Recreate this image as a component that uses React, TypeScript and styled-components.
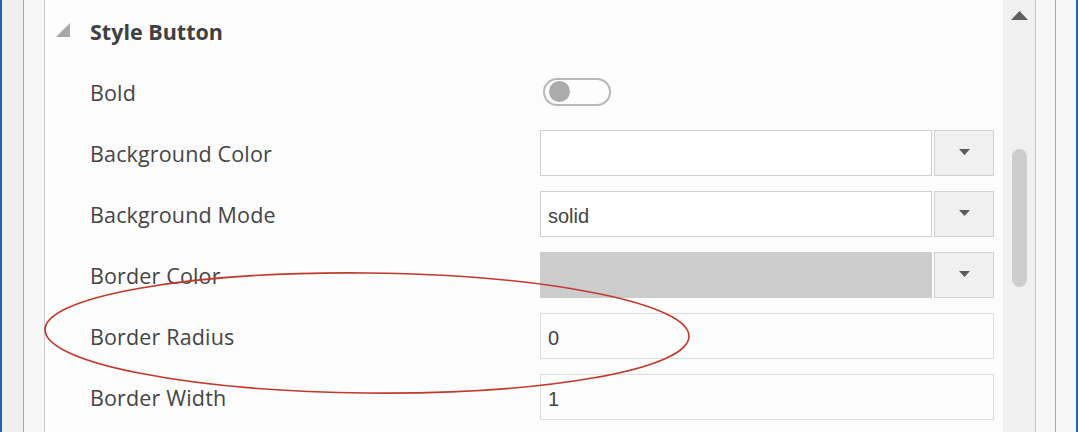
import React from "react";
import styled, { createGlobalStyle } from "styled-components";

const Global = createGlobalStyle`
  html, body { margin: 0; padding: 0; background: #fcfcfc; }
  body { font-family: "Open Sans", "Noto Sans", sans-serif; }
`;

const Frame = styled.div`
  position: relative;
  display: flex;
  width: 1078px;
  height: 432px;
  overflow: hidden;
  background: #fcfcfc;
`;

const Edge = styled.div<{ $w: number }>`
  width: ${(p) => p.$w}px;
  flex: none;
  background: #1a64b4;
`;

const Gutter = styled.div<{ $w: number; $bg: string; $line?: string }>`
  width: ${(p) => p.$w}px;
  flex: none;
  background: ${(p) => p.$bg};
  ${(p) => (p.$line ? `border-right: 1px solid ${p.$line};` : "")}
`;

const Main = styled.div`
  flex: 1;
  display: flex;
  flex-direction: column;
  padding-left: 11px;
  padding-right: 9px;
`;

const Header = styled.div`
  height: 61px;
  box-sizing: border-box;
  padding-top: 2px;
  display: flex;
  align-items: center;
  gap: 20px;
`;

const Caret = styled.svg`
  width: 14px;
  height: 14px;
  flex: none;
  margin-top: -3px;
`;

const Title = styled.span`
  font-size: 21.5px;
  font-weight: 700;
  color: #404040;
`;

const Row = styled.div`
  height: 61px;
  display: flex;
  align-items: center;
  padding-left: 34px;
`;

const Label = styled.span`
  width: 450px;
  flex: none;
  padding-top: 2px;
  font-size: 21.5px;
  color: #454545;
  letter-spacing: 0.15px;
`;

const Field = styled.div`
  flex: 1;
  display: flex;
  gap: 2px;
  height: 46px;
`;

const Box = styled.div<{ $fill?: string; $border?: string }>`
  flex: 1;
  box-sizing: border-box;
  border: 1px solid ${(p) => p.$border ?? "#cfcfcf"};
  background: ${(p) => p.$fill ?? "#ffffff"};
  display: flex;
  align-items: center;
  padding-left: 7px;
  padding-top: 5px;
  font-family: "Liberation Sans", Arial, sans-serif;
  font-size: 20px;
  color: #444;
`;

const DropButton = styled.div`
  width: 60px;
  flex: none;
  box-sizing: border-box;
  border: 1px solid #d2d2d2;
  background: #f0f0f0;
  display: flex;
  align-items: center;
  justify-content: center;
`;

const Toggle = styled.div`
  width: 68px;
  height: 28px;
  box-sizing: border-box;
  border: 2px solid #b8b8b8;
  border-radius: 14px;
  display: flex;
  align-items: center;
  padding-left: 4px;
  margin-left: 3px;
  background: #fdfdfd;
`;

const Knob = styled.div`
  width: 21px;
  height: 21px;
  border-radius: 50%;
  background: #ababab;
`;

const Track = styled.div`
  width: 33px;
  flex: none;
  background: #f0f0f0;
  border-right: 1px solid #c4c4c4;
  display: flex;
  flex-direction: column;
  align-items: center;
  padding-top: 11px;
  box-sizing: border-box;
`;

const UpArrow = styled.svg`
  width: 17px;
  height: 9px;
`;

const Thumb = styled.div`
  margin-top: 129px;
  width: 15px;
  height: 138px;
  border-radius: 8px;
  background: #cdcdcd;
`;

const Annotation = styled.svg`
  position: absolute;
  left: 0;
  top: 0;
  width: 1078px;
  height: 432px;
  pointer-events: none;
`;

const Arrow = () => (
  <svg width="11" height="7" viewBox="0 0 11 7">
    <path d="M0 0 H11 L5.5 6 Z" fill="#5a5a5a" />
  </svg>
);

const Dropdown = ({ value, fill }: { value?: string; fill?: string }) => (
  <Field>
    <Box $fill={fill} $border={fill ? "#cccccc" : undefined}>{value}</Box>
    <DropButton>
      <Arrow />
    </DropButton>
  </Field>
);

const TextInput = ({ value }: { value: string }) => (
  <Field>
    <Box $fill="#fdfdfd" $border="#dcdcdc">{value}</Box>
  </Field>
);

export default function App() {
  return (
    <>
      <Global />
      <Frame>
        <Edge $w={2} />
        <Gutter $w={21} $bg="#efefef" $line="#a9a9a9" />
        <Gutter $w={20} $bg="#f6f6f6" $line="#cccccc" />
        <Main>
          <Header>
            <Caret viewBox="0 0 14 14">
              <path d="M14 0 V14 H0 Z" fill="#a8a8a8" />
            </Caret>
            <Title>Style Button</Title>
          </Header>
          <Row>
            <Label>Bold</Label>
            <Toggle>
              <Knob />
            </Toggle>
          </Row>
          <Row>
            <Label>Background Color</Label>
            <Dropdown />
          </Row>
          <Row>
            <Label>Background Mode</Label>
            <Dropdown value="solid" />
          </Row>
          <Row>
            <Label>Border Color</Label>
            <Dropdown fill="#cccccc" />
          </Row>
          <Row>
            <Label>Border Radius</Label>
            <TextInput value="0" />
          </Row>
          <Row>
            <Label>Border Width</Label>
            <TextInput value="1" />
          </Row>
        </Main>
        <Track>
          <UpArrow viewBox="0 0 17 9">
            <path d="M8.5 0 L17 9 H0 Z" fill="#5f5f5f" />
          </UpArrow>
          <Thumb />
        </Track>
        <Gutter $w={19} $bg="#f6f6f6" $line="#a9a9a9" />
        <Gutter $w={20} $bg="#f6f6f6" />
        <Edge $w={2} />
        <Annotation viewBox="0 0 1078 432">
          <ellipse
            cx="367"
            cy="333"
            rx="322"
            ry="60"
            transform="rotate(0.6 367 333)"
            fill="none"
            stroke="#c0392b"
            strokeWidth="1.6"
          />
        </Annotation>
      </Frame>
    </>
  );
}
